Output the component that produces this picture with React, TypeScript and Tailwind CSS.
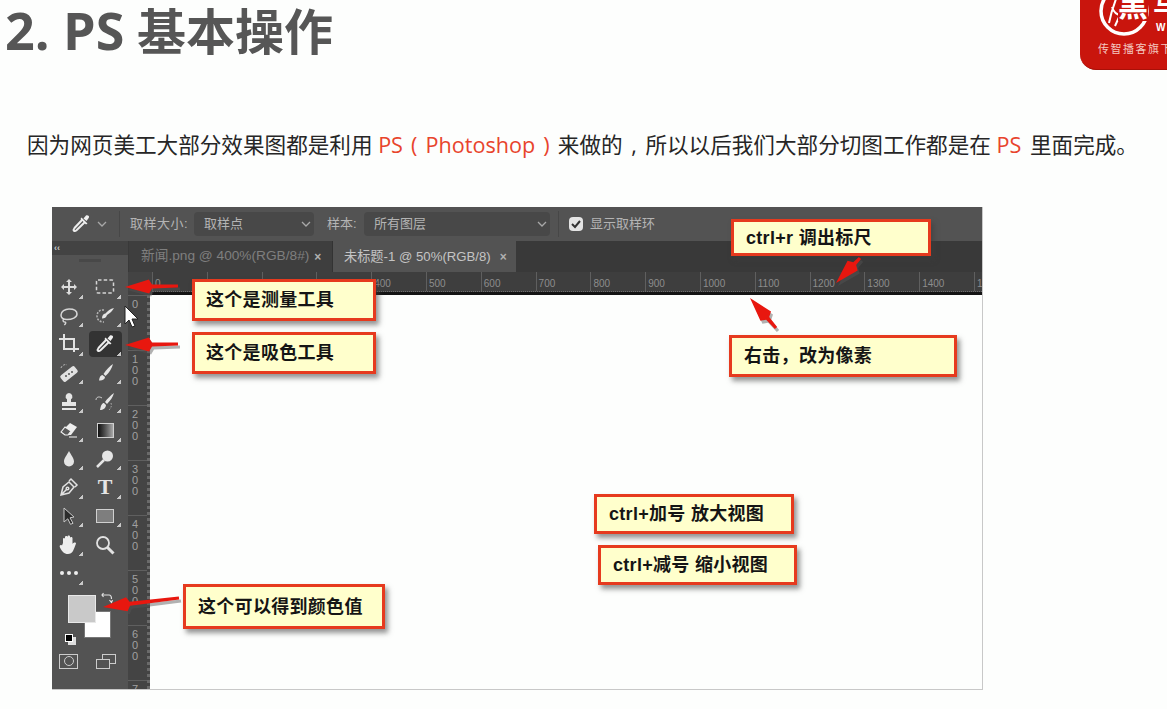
import type { ReactNode } from 'react';

const cjk = "font-['Liberation_Sans','Noto_Sans_CJK_SC',sans-serif]";

function Chevron({ className }: { className: string }) {
  return (
    <svg width="10" height="6" viewBox="0 0 10 6" className={className} fill="none" stroke="currentColor" strokeWidth="1.3">
      <path d="M1 1l4 4 4-4" />
    </svg>
  );
}

function Dropper({ size = 20 }: { size?: number }) {
  return (
    <svg width={size} height={size} viewBox="0 0 20 20" fill="none">
      <path d="M11.500 5.500L3.500 14c-.8 1-1 2-.6 2.700.7.500 1.700.300 2.600-.5L14 8" stroke="#ececec" strokeWidth="2" />
      <path d="M10.500 3.500l6 6-1.500 1-5.500-5.500zM12.500 4.500l2.500-3c.8-.6 1.800-.4 2.500.3.700.7.800 1.700 0 2.500L15.500 7z" fill="#f0f0f0" />
    </svg>
  );
}

const toolIcons: Record<string, ReactNode> = {
  move: (
    <svg width="20" height="20" viewBox="0 0 20 20" fill="#dcdcdc">
      <path d="M10 2l3 3h-2v4h4V7l3 3-3 3v-2h-4v4h2l-3 3-3-3h2v-4H5v2l-3-3 3-3v2h4V5H7z" />
    </svg>
  ),
  marquee: (
    <svg width="20" height="20" viewBox="0 0 20 20" fill="none" stroke="#d5d5d5" strokeWidth="1.500" strokeDasharray="3.500 2.200">
      <rect x="1.500" y="3" width="17" height="13" rx="1.500" />
    </svg>
  ),
  lasso: (
    <svg width="20" height="20" viewBox="0 0 20 20" fill="none" stroke="#d5d5d5" strokeWidth="1.500">
      <path d="M10 3c5 0 8 2 8 5 0 3.500-5 5.500-10 5.500C4 13.500 2 11.500 2 9c0-3.500 4-6 8-6z" />
      <path d="M5 13c-1.500 1-1.200 3 .8 3 1.500 0 1 2-.5 3" />
    </svg>
  ),
  quick: (
    <svg width="20" height="20" viewBox="0 0 20 20" fill="none">
      <path d="M9 4C5 3.500 2 6 2 10c0 4 3 6 7 6" stroke="#b5b5b5" strokeWidth="1.500" strokeDasharray="2 1.300" />
      <path d="M19 2c-3.500.5-6.500 3-8.500 5.500-2-.2-3.500 2-3.500 5 2.500 0 4.500-1 5-3.500 3-2 5.500-4 7-7z" fill="#e5e5e5" />
    </svg>
  ),
  crop: (
    <svg width="20" height="20" viewBox="0 0 20 20" fill="none" stroke="#e2e2e2" strokeWidth="2">
      <path d="M0 5h15v13M5 0v15h15" />
    </svg>
  ),
  dropper: <Dropper />,
  heal: (
    <svg width="22" height="22" viewBox="0 0 22 22" fill="none">
      <path d="M3 6c1-3 4-4 6-3" stroke="#bbb" strokeDasharray="2 1.500" />
      <rect x="2" y="8" width="18" height="8" rx="2" transform="rotate(-38 11 12)" fill="#e2e2e2" />
      <circle cx="11" cy="12" r="1" fill="#555" />
      <circle cx="8" cy="14" r="1" fill="#555" />
      <circle cx="14" cy="10" r="1" fill="#555" />
    </svg>
  ),
  brush: (
    <svg width="20" height="20" viewBox="0 0 20 20" fill="#e5e5e5">
      <path d="M18 1c-3 2-7 6-9.500 10l2 2c3.500-3 6.500-8 7.500-12zM7.500 12c-2 .3-3 2-3.500 5.500 3 .5 6-1 6-3.500z" />
    </svg>
  ),
  stamp: (
    <svg width="20" height="20" viewBox="0 0 20 20" fill="#e5e5e5">
      <path d="M10 1a3.500 3.500 0 0 1 2 6.300V10h5v4H3v-4h5V7.300A3.500 3.500 0 0 1 10 1zM3 16h14v2H3z" />
    </svg>
  ),
  history: (
    <svg width="20" height="20" viewBox="0 0 20 20" fill="none">
      <path d="M19 1c-3 2-7 6-9 9l2 2c3-3 6-7 7-11zM9 11c-2 0-3 2-4 7 3 0 6-2 6-5z" fill="#e5e5e5" />
      <path d="M1 8c0-3 3-4 6-2" stroke="#ccc" />
      <path d="M16 11c1 3 0 5-2 7" stroke="#aaa" strokeDasharray="1.500 1.500" />
    </svg>
  ),
  eraser: (
    <svg width="20" height="20" viewBox="0 0 20 20">
      <path d="M11 3l7 4-6 8H6l-4-3z" fill="#eee" />
      <path d="M2 12l4-5 6 4-3 4H6z" fill="#595959" stroke="#eee" strokeWidth="1.200" />
      <path d="M10 17h8" stroke="#ddd" strokeWidth="1.200" />
    </svg>
  ),
  gradient: <div className="h-[15px] w-[17px] border border-[#d0d0d0] bg-gradient-to-r from-[#111111] to-[#a8a8a8]" />,
  blur: (
    <svg width="20" height="20" viewBox="0 0 20 20" fill="#e5e5e5">
      <path d="M10 2c2 4 5 7 5 10.500A5 5 0 0 1 5 12.500C5 9 8 6 10 2z" />
    </svg>
  ),
  dodge: (
    <svg width="20" height="20" viewBox="0 0 20 20" fill="none">
      <circle cx="12.500" cy="7" r="5.500" fill="#e5e5e5" />
      <path d="M9 11l-7 7" stroke="#e5e5e5" strokeWidth="2.500" />
    </svg>
  ),
  pen: (
    <svg width="20" height="20" viewBox="0 0 20 20" fill="none" stroke="#e2e2e2" strokeWidth="1.500">
      <path d="M2 18l2-8 6-5 5 5-5 6zM2 18l5.500-5.500M10 4l2-2 6 6-2 2" />
      <circle cx="8.500" cy="11.500" r="1.300" />
    </svg>
  ),
  type: <span className="font-['Liberation_Serif',serif] text-[22px] leading-none font-bold text-[#e5e5e5]">T</span>,
  select: (
    <svg width="20" height="20" viewBox="0 0 20 20">
      <path d="M5 2l10 9-4 .8 3 5.500-2.500 1-2.700-5.500L5 16z" fill="#2b2b2b" stroke="#c8c8c8" />
    </svg>
  ),
  rect: <div className="h-[14px] w-[18px] border border-[#d0d0d0] bg-[#7e7e7e]" />,
  hand: (
    <svg width="22" height="22" viewBox="0 0 22 22" fill="#eeeeee">
      <path d="M5 9V5c0-1.500 2-1.500 2 0v-2c0-1.500 2.500-1.500 2.500 0v-.5c0-1.500 2.500-1.500 2.500 0V4c0-1.500 2.500-1.500 2.500 0v6c1-2 3.500-2 3.500-.5-1 3-2 5-3 7.500-1 2-3 3-5 3-4 0-6-2.500-8-6.500-1-2 .5-3 2-2z" />
    </svg>
  ),
  zoom: (
    <svg width="20" height="20" viewBox="0 0 20 20" fill="none" stroke="#e2e2e2">
      <circle cx="8" cy="8" r="6" strokeWidth="1.800" />
      <path d="M12.500 12.500L18.500 18.500" strokeWidth="3" />
    </svg>
  ),
  more: (
    <div className="flex gap-[3px]">
      <span className="size-[4px] rounded-full bg-[#eeeeee]" />
      <span className="size-[4px] rounded-full bg-[#eeeeee]" />
      <span className="size-[4px] rounded-full bg-[#eeeeee]" />
    </div>
  ),
};

const tools: [string, boolean][] = [
  ['move', true], ['marquee', true],
  ['lasso', true], ['quick', true],
  ['crop', true], ['dropper', true],
  ['heal', true], ['brush', true],
  ['stamp', true], ['history', true],
  ['eraser', true], ['gradient', true],
  ['blur', true], ['dodge', true],
  ['pen', true], ['type', true],
  ['select', true], ['rect', true],
  ['hand', true], ['zoom', false],
  ['more', true],
];

function Tool({ name, flyout }: { name: string; flyout: boolean }) {
  return (
    <div className="relative flex h-[28.6px] items-center justify-center">
      {name === 'dropper' && <div className="absolute top-px left-[3px] h-[26px] w-[33px] rounded-sm bg-[#333333]" />}
      <div className="relative flex items-center justify-center">{toolIcons[name]}</div>
      {flyout && <div className="absolute right-[3px] bottom-[3px] size-[4px] bg-[linear-gradient(135deg,transparent_50%,#c8c8c8_50%)]" />}
    </div>
  );
}

function Callout({ className, children }: { className: string; children: ReactNode }) {
  return (
    <div className={`absolute flex items-center border-[3px] border-[#e63a1e] bg-[#ffffcc] text-[18px] leading-none font-bold tracking-[0.300px] text-[#151515] shadow-[3px_4px_5px_rgba(60,60,60,0.55)] ${className}`}>
      {children}
    </div>
  );
}

const hLabels = ['0', '100', '200', '300', '400', '500', '600', '700', '800', '900', '1000', '1100', '1200', '1300', '1400', '1500', '1600'];
const vLabels = ['0', '100', '200', '300', '400', '500', '600', '700'];

// red tapered arrows: [tailX, tailY, tipX, tipY], window coords
const arrows = [
  [126, 79, 73, 80],
  [126, 137, 73, 138],
  [127, 391, 51, 400],
  [808, 51, 784, 76],
  [724, 121, 698, 91],
];

function Arrow({ a }: { a: number[] }) {
  const [x1, y1, x2, y2] = a;
  const len = Math.hypot(x2 - x1, y2 - y1);
  const ux = (x2 - x1) / len;
  const uy = (y2 - y1) / len;
  const nx = -uy;
  const ny = ux;
  const bx = x2 - ux * 24;
  const by = y2 - uy * 24;
  const pts = [
    [x1 - nx * 1.500, y1 - ny * 1.500],
    [bx - nx * 2 - ux * 3, by - ny * 2 - uy * 3],
    [bx - nx * 7, by - ny * 7],
    [x2, y2],
    [bx + nx * 7, by + ny * 7],
    [bx + nx * 2 - ux * 3, by + ny * 2 - uy * 3],
    [x1 + nx * 1.500, y1 + ny * 1.500],
  ]
    .map((p) => p.join(','))
    .join(' ');
  return (
    <g>
      <polygon points={pts} fill="#555555" opacity="0.45" transform="translate(2 3)" />
      <polygon points={pts} fill="#e8170f" />
    </g>
  );
}

function PsWindow() {
  return (
    <div className={`relative ml-[52px] flex h-[483px] w-[931px] flex-col border-r border-b border-[#c8c8c8] bg-white ${cjk}`}>
      {/* options bar */}
      <div className="flex h-[34px] items-center bg-[#535353] text-[13px] text-[#b4b4b4]">
        <div className="ml-[19px]"><Dropper /></div>
        <Chevron className="ml-[6px] text-[#a8a8a8]" />
        <div className="ml-[12px] h-[26px] w-px bg-[#474747]" />
        <span className="ml-[10px] w-[64px] tracking-[0.500px]">取样大小:</span>
        <div className="flex h-[24px] w-[120px] items-center justify-between rounded-sm bg-[#484848] pr-[3px] pl-[10px]">
          <span>取样点</span>
          <Chevron className="text-[#a8a8a8]" />
        </div>
        <span className="ml-[13px] w-[37px]">样本:</span>
        <div className="flex h-[24px] w-[186px] items-center justify-between rounded-sm bg-[#484848] pr-[3px] pl-[10px]">
          <span>所有图层</span>
          <Chevron className="text-[#a8a8a8]" />
        </div>
        <div className="ml-[8px] h-[26px] w-px bg-[#474747]" />
        <div className="ml-[10px] flex size-[14px] items-center justify-center rounded-sm bg-[#e4e4e4]">
          <svg width="10" height="10" viewBox="0 0 10 10" fill="none" stroke="#333" strokeWidth="2">
            <path d="M1 5l3 3 5-6" />
          </svg>
        </div>
        <span className="ml-[7px]">显示取样环</span>
      </div>

      <div className="flex min-h-0 flex-1">
        {/* tools */}
        <div className="flex w-[76px] shrink-0 flex-col bg-[#535353]">
          <div className="flex h-[14px] items-center bg-[#434343] pl-[2px] text-[9px] leading-none font-bold text-[#cccccc]">‹‹</div>
          <div className="mx-auto mt-[4px] h-[3px] w-[22px] bg-[#484848]" />
          <div className="mt-[11px] grid grid-cols-[34px_38px]">
            {tools.map(([name, flyout]) => (
              <Tool key={name} name={name} flyout={flyout} />
            ))}
          </div>
          <div className="relative mx-[16px] mt-[7px] h-[46px] w-[44px]">
            <div className="absolute top-[16px] left-[16px] size-[27px] border border-[#777777] bg-white" />
            <div className="absolute top-0 left-0 size-[28px] border border-[#e8e8e8] bg-[#c9c9c9]" />
            <svg width="12" height="12" viewBox="0 0 12 12" fill="none" stroke="#e0e0e0" strokeWidth="1.200" className="absolute top-[-3px] left-[33px]">
              <path d="M1 3h7c2 0 2.500 1.500 2.500 4M2.500 1L1 3l1.500 2M8.500 8l2 2.500 1-2.500" />
            </svg>
          </div>
          <div className="mt-[-7px] ml-[13px] flex size-[13px] items-start">
            <div className="size-[8px] border border-white bg-black shadow-[3px_3px_0_#dddddd]" />
          </div>
          <div className="mt-[7px] flex items-center">
            <div className="ml-[7px] flex h-[15px] w-[19px] items-center justify-center border border-[#cccccc]">
              <div className="size-[10px] rounded-full border border-[#cccccc]" />
            </div>
            <div className="relative ml-[18px] h-[15px] w-[20px]">
              <div className="absolute top-0 right-0 h-[10px] w-[14px] border border-[#cccccc]" />
              <div className="absolute bottom-0 left-0 h-[10px] w-[14px] border border-[#cccccc] bg-[#535353]" />
            </div>
          </div>
        </div>

        <div className="flex min-w-0 flex-1 flex-col">
          {/* tabs */}
          <div className="flex h-[31px] shrink-0 items-stretch bg-[#393939] pl-[1px]">
            <div className="flex w-[204px] items-center border-r border-[#333333] bg-[#3e3e3e] pl-[12px] text-[13.700px] text-[#7f7f7f]">
              <span>新闻.png @ 400%(RGB/8#)</span>
              <span className="ml-[5px] text-[12px] font-bold text-[#b0b0b0]">×</span>
            </div>
            <div className="flex w-[183px] items-center bg-[#535353] pl-[11px] text-[13.200px] text-[#c4c4c4]">
              <span>未标题-1 @ 50%(RGB/8)</span>
              <span className="ml-[9px] text-[12px] font-bold text-[#b0b0b0]">×</span>
            </div>
          </div>

          {/* horizontal ruler */}
          <div className="flex h-[23px] shrink-0 bg-[#3e3e3e]">
            <div className="h-full w-[24px] shrink-0 bg-[#434343]" />
            <div className="flex min-w-0 flex-1 flex-col">
              <div className="flex h-[20px] overflow-hidden border-b border-dotted border-[#6e6e6e]">
                {hLabels.map((l) => (
                  <div key={l} className="h-full w-[54.800px] shrink-0 border-l border-[#5f5f5f] pl-[2px] text-[10px] leading-[23px] text-[#8d8d8d]">
                    {l}
                  </div>
                ))}
              </div>
              <div className="h-[3px] bg-[#141414]" />
            </div>
          </div>

          <div className="flex min-h-0 flex-1">
            {/* vertical ruler */}
            <div className="flex w-[22px] shrink-0 flex-col overflow-hidden border-r-[3px] border-dotted border-[#6a6a6a] bg-[#444444]">
              {vLabels.map((l) => (
                <div key={l} className="flex h-[55px] shrink-0 flex-col border-t border-[#5f5f5f] pt-[3px] pl-[4px] text-[11px] leading-[11px] text-[#a0a0a0]">
                  {l.split('').map((d, i) => (
                    <span key={i}>{d}</span>
                  ))}
                </div>
              ))}
            </div>
            <div className="flex-1 bg-[#fdfefd]" />
          </div>
        </div>
      </div>

      {/* annotations */}
      <Callout className="top-[72px] left-[140px] h-[42px] w-[184px] pl-[11px]">这个是测量工具</Callout>
      <Callout className="top-[125px] left-[140px] h-[42px] w-[184px] pl-[11px]">这个是吸色工具</Callout>
      <Callout className="top-[377px] left-[131px] h-[45px] w-[202px] pl-[12px]">这个可以得到颜色值</Callout>
      <Callout className="top-[12px] left-[679px] h-[37px] w-[200px] pl-[12px]">ctrl+r 调出标尺</Callout>
      <Callout className="top-[128px] left-[677px] h-[42px] w-[228px] pl-[12px]">右击，改为像素</Callout>
      <Callout className="top-[287px] left-[542px] h-[40px] w-[200px] pl-[12px]">ctrl+加号 放大视图</Callout>
      <Callout className="top-[338px] left-[546px] h-[40px] w-[199px] pl-[12px]">ctrl+减号 缩小视图</Callout>

      <svg className="pointer-events-none absolute inset-0" width="931" height="483">
        {arrows.map((a) => (
          <Arrow key={a.join()} a={a} />
        ))}
        <path d="M73 99v18l4-4 3 7 3-1-3-7h6z" fill="#ffffff" stroke="#222222" />
      </svg>
    </div>
  );
}

function Logo() {
  return (
    <div className="relative h-[70px] w-[87px] shrink-0 overflow-hidden rounded-bl-[16px] border-b border-[#a81008] bg-[#c9150d] font-['Liberation_Sans','Noto_Sans_CJK_SC',sans-serif] text-white">
      <svg className="absolute top-[-15px] left-[18px]" width="52" height="52" viewBox="0 0 52 52" fill="none">
        <circle cx="26" cy="26" r="23" stroke="#ffffff" strokeWidth="3.500" />
        <path d="M18 14c-3 8-5 14-7 24M22 30l-5 11M14 22c2 6 6 8 9 8" stroke="#ffffff" strokeWidth="2" />
      </svg>
      <span className="absolute top-[-9px] left-[38px] bg-[#c9150d] text-[30px] leading-none font-bold">黑</span>
      <span className="absolute top-[-8px] left-[73px] text-[26px] leading-none font-bold">马</span>
      <span className="absolute top-[23px] left-[76px] text-[10px] leading-none font-bold">W</span>
      <span className="absolute top-[44px] left-[18px] text-[11px] leading-none tracking-[1.500px] whitespace-nowrap text-[#f4c8c0]">传智播客旗下</span>
    </div>
  );
}

export default function App() {
  return (
    <div className={`h-[709px] w-[1167px] overflow-hidden bg-[#fdfefd] ${cjk}`}>
      <div className="flex h-[70px] justify-between">
        <h1 className="pt-[2px] pl-[5px] font-['Open_Sans','Noto_Sans_CJK_SC',sans-serif] text-[49px] leading-[56px] font-bold whitespace-nowrap text-[#565656]">
          <span className="text-[52px]">2. PS</span> 基本操作
        </h1>
        <Logo />
      </div>
      <p className="mt-[59px] pl-[27px] font-['Open_Sans','Noto_Sans_CJK_SC',sans-serif] text-[21.600px] leading-[32px] whitespace-nowrap text-[#262626]">
        因为网页美工大部分效果图都是利用 <span className="text-[#e8442c] [word-spacing:2.500px]">PS ( Photoshop ) </span>来做的<span className="[word-spacing:3px]"> , </span>所以以后我们大部分切图工作都是在 <span className="text-[#e8442c]">PS</span><span className="[word-spacing:3px]"> </span>里面完成。
      </p>
      <div className="mt-[46px]">
        <PsWindow />
      </div>
    </div>
  );
}
